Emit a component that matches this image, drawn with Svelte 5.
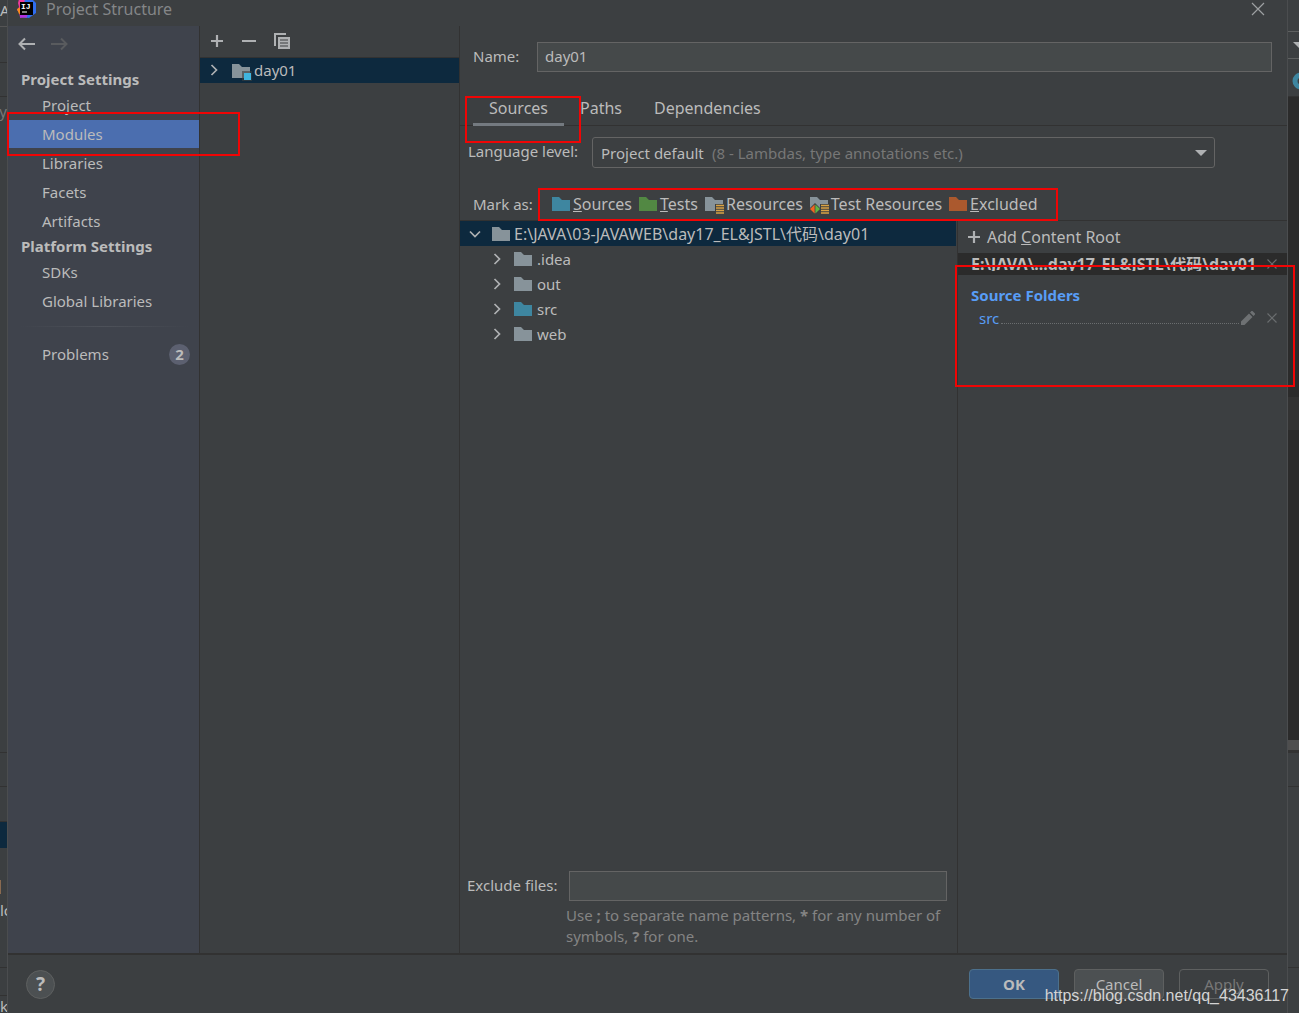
<script>
	let section = $state('Modules');
	let tab = $state('Sources');
	let name = $state('day01');
	let exclude = $state('');

	const projectItems = ['Project', 'Modules', 'Libraries', 'Facets', 'Artifacts'];
	const platformItems = ['SDKs', 'Global Libraries'];
	const tabs = ['Sources', 'Paths', 'Dependencies'];

	const marks = [
		{ key: 'S', rest: 'ources', kind: 'source' },
		{ key: 'T', rest: 'ests', kind: 'test' },
		{ key: '', rest: 'Resources', kind: 'resource' },
		{ key: '', rest: 'Test Resources', kind: 'test-resource' },
		{ key: 'E', rest: 'xcluded', kind: 'excluded' }
	];

	const folders = [
		{ name: '.idea', kind: 'plain' },
		{ name: 'out', kind: 'plain' },
		{ name: 'src', kind: 'source' },
		{ name: 'web', kind: 'plain' }
	];

	const colors = {
		plain: '#87939a',
		source: '#3e86a0',
		test: '#528843',
		resource: '#87939a',
		'test-resource': '#87939a',
		excluded: '#ab592e',
		module: '#87939a'
	};
</script>

{#snippet folder(kind)}
	<svg class="folder" width="20" height="18" viewBox="0 0 20 18" aria-hidden="true">
		<path d="M0 1h7l3 3h8v11H0z" fill={colors[kind]} />
		{#if kind === 'module'}
			<path d="M10 8h10v10H10z" fill="#3c3f41" opacity=".6" />
			<path d="M12 10h7v7h-7z" fill="#40b6e0" />
		{/if}
		{#if kind === 'resource' || kind === 'test-resource'}
			<path d="M10 8h9v10h-9z" fill="#3c3f41" />
			<path d="M11 9.500h8M11 12h8M11 14.500h8M11 17h8" stroke="#d9a343" stroke-width="1.400" />
		{/if}
		{#if kind === 'test-resource'}
			<path d="M0 12l5-5 5 5v6H0z" fill="#3c3f41" />
			<path d="M4.600 8.500v9L0 13z" fill="#f26522" />
			<path d="M5.400 8.500v9L10 13z" fill="#62b543" />
		{/if}
	</svg>
{/snippet}

{#snippet chevron(open)}
	<svg class="chevron" width="12" height="12" viewBox="0 0 12 12" aria-hidden="true">
		<path d={open ? 'M1 3.500l5 5 5-5' : 'M3.500 1l5 5-5 5'} fill="none" stroke="#afb1b3" stroke-width="1.700" />
	</svg>
{/snippet}

{#snippet plus()}
	<svg width="14" height="14" viewBox="0 0 14 14" aria-hidden="true">
		<path d="M7 1v12M1 7h12" stroke="#afb1b3" stroke-width="2.200" />
	</svg>
{/snippet}

{#snippet cross()}
	<svg width="12" height="12" viewBox="0 0 12 12" aria-hidden="true">
		<path d="M1.500 1.500l9 9M10.500 1.500l-9 9" stroke="#6a6d6f" stroke-width="1.200" />
	</svg>
{/snippet}

<div class="screen">
	<div class="behind left">
		<div class="bit l1">A</div>
		<div class="bit l2"></div>
		<div class="bit l3"></div>
		<div class="bit l4">ay</div>
		<div class="bit l5"></div>
		<div class="bit l6"></div>
		<div class="bit selected"></div>
		<div class="bit l7"><i></i>lc</div>
		<div class="bit l8"></div>
		<div class="bit l9">k</div>
	</div>

	<div class="dialog">
		<header>
			<svg class="logo" width="20" height="20" viewBox="0 0 20 20" aria-hidden="true">
				<path d="M2 0h6l3 3-1 16-7-1-1-5-2-2 2-3-1-4z" fill="#f0389a" />
				<path d="M0 10l4-2 1 6-3 1z" fill="#f98b1c" />
				<path d="M8 0h7l4 4v10l-7 5-8-1z" fill="#2f6df0" />
				<path d="M3 15l8-2-1 5-7 1z" fill="#b132e0" />
				<path d="M3 3h13v13H3z" fill="#000" />
				<text x="4" y="10" font-size="8" font-weight="700" fill="#fff">IJ</text>
				<path d="M5 13h5" stroke="#fff" />
			</svg>
			<h1>Project Structure</h1>
			<button class="icon close" aria-label="Close">
				<svg width="14" height="14" viewBox="0 0 14 14"><path d="M1 1l12 12M13 1L1 13" stroke="#9da0a2" stroke-width="1.200" /></svg>
			</button>
		</header>

		<main>
			<nav class="sidebar">
				<div class="history">
					<button class="icon" aria-label="Back">
						<svg width="17" height="14" viewBox="0 0 17 14"><path d="M7 1.500L1.500 7 7 12.500M2 7h15" fill="none" stroke="#afb1b3" stroke-width="2" /></svg>
					</button>
					<button class="icon" aria-label="Forward" disabled>
						<svg width="17" height="14" viewBox="0 0 17 14"><path d="M10 1.500L15.500 7 10 12.500M15 7H0" fill="none" stroke="#595b5e" stroke-width="2" /></svg>
					</button>
				</div>
				<h2>Project Settings</h2>
				{#each projectItems as item}
					<button class="item" class:active={section === item} onclick={() => (section = item)}>
						{item}
						{#if item === 'Modules'}<span class="mark mark-modules"></span>{/if}
					</button>
				{/each}
				<h2>Platform Settings</h2>
				{#each platformItems as item}
					<button class="item" class:active={section === item} onclick={() => (section = item)}>{item}</button>
				{/each}
				<hr />
				<button class="item problems">Problems <span class="badge">2</span></button>
			</nav>

			<section class="modules">
				<div class="tools">
					<button class="icon" aria-label="Add">{@render plus()}</button>
					<button class="icon" aria-label="Remove">
						<svg width="14" height="14" viewBox="0 0 14 14"><path d="M0 7h14" stroke="#afb1b3" stroke-width="2" /></svg>
					</button>
					<button class="icon" aria-label="Copy">
						<svg width="16" height="18" viewBox="0 0 16 18">
							<path d="M1 14V2h11" fill="none" stroke="#afb1b3" stroke-width="2" />
							<path d="M4 5h12v12H4z" fill="#afb1b3" />
							<path d="M6 8h8M6 11h8M6 14h8" stroke="#3c3f41" stroke-width="1.200" />
						</svg>
					</button>
				</div>
				<div class="module">{@render chevron(false)}{@render folder('module')}<span>day01</span></div>
			</section>

			<section class="editor">
				<div class="name">
					<label for="name">Name:</label>
					<input id="name" bind:value={name} />
				</div>

				<div class="tabs" role="tablist">
					{#each tabs as t}
						<button role="tab" aria-selected={tab === t} class:current={tab === t} onclick={() => (tab = t)}>{t}</button>
					{/each}
					<span class="mark mark-tab"></span>
				</div>

				<div class="level">
					<label for="level">Language level:</label>
					<div class="combo">
						<select id="level">
							<option>Project default</option>
						</select>
						<span class="detail">(8 - Lambdas, type annotations etc.)</span>
						<svg class="arrow" width="12" height="6" viewBox="0 0 12 6" aria-hidden="true"><path d="M0 0h12L6 6z" fill="#afb1b3" /></svg>
					</div>
				</div>

				<div class="mark-as">
					<span>Mark as:</span>
					<div class="kinds">
						{#each marks as m}
							<button>{@render folder(m.kind)}<span><u>{m.key}</u>{m.rest}</span></button>
						{/each}
						<span class="mark mark-kinds"></span>
					</div>
				</div>

				<div class="panes">
					<div class="tree-pane">
						<ul class="tree">
							<li class="root">{@render chevron(true)}{@render folder('plain')}<span>E:\JAVA\03-JAVAWEB\day17_EL&amp;JSTL\代码\day01</span></li>
							{#each folders as f}
								<li>{@render chevron(false)}{@render folder(f.kind)}<span>{f.name}</span></li>
							{/each}
						</ul>
						<div class="exclude">
							<label for="exclude">Exclude files:</label>
							<input id="exclude" bind:value={exclude} />
						</div>
						<p>Use <b>;</b> to separate name patterns, <b>*</b> for any number of symbols, <b>?</b> for one.</p>
					</div>

					<aside>
						<button class="add-root">{@render plus()}<span>Add <u>C</u>ontent Root</span></button>
						<div class="content-root">
							<strong>E:\JAVA\...day17_EL&amp;JSTL\代码\day01</strong>
							<button class="icon" aria-label="Remove content root">{@render cross()}</button>
						</div>
						<div class="sources">
							<h3>Source Folders</h3>
							<div class="source">
								<a href="#src">src</a>
								<span class="dots"></span>
								<button class="icon" aria-label="Edit">
									<svg width="14" height="14" viewBox="0 0 14 14"><path d="M0 14v-3.500L8 2.500 11.500 6l-8 8zM9 1.500L10.500 0h1L14 2.500v1L12.500 5z" fill="#6e7173" /></svg>
								</button>
								<button class="icon" aria-label="Remove source folder">{@render cross()}</button>
							</div>
							<span class="mark mark-sources"></span>
						</div>
					</aside>
				</div>
			</section>
		</main>

		<footer>
			<button class="help" aria-label="Help">?</button>
			<button class="push ok">OK</button>
			<button class="push cancel">Cancel</button>
			<button class="push apply" disabled>Apply</button>
		</footer>
	</div>

	<div class="behind right">
		<div class="bit r1"></div>
		<div class="bit r2"><svg width="11" height="7" viewBox="0 0 11 7"><path d="M0 0h11L6 6z" fill="#afb1b3" /></svg></div>
		<div class="bit r3"><svg width="11" height="18" viewBox="0 0 11 18"><circle cx="9" cy="9" r="6" fill="none" stroke="#3e86a0" stroke-width="5" /></svg></div>
		<div class="bit r4"></div>
		<div class="bit r5"></div>
		<div class="bit r6"></div>
		<div class="bit r7"></div>
		<div class="bit r8"></div>
		<div class="bit r9"></div>
		<div class="bit r10"></div>
	</div>

	<div class="watermark">https://blog.csdn.net/qq_43436117</div>
</div>

<style>
	:global(body) {
		background: #3c3f41;
	}

	.screen {
		position: relative;
		display: flex;
		min-height: 100vh;
		overflow: hidden;
		color: #bbbbbb;
		font: 15px/20px "Noto Sans", "Noto Sans CJK SC", sans-serif;
	}

	.screen * {
		box-sizing: border-box;
	}

	button, input, select {
		font: inherit;
		color: inherit;
		margin: 0;
	}

	button {
		background: none;
		border: 0;
		padding: 0;
		white-space: nowrap;
	}

	h1, h2, h3, p, ul {
		margin: 0;
		padding: 0;
		font-size: 15px;
	}

	svg {
		display: block;
		flex: none;
	}

	.icon {
		display: flex;
		flex: none;
	}

	/* red highlight frames */
	.mark {
		position: absolute;
		border: 2px solid #f00505;
		pointer-events: none;
		z-index: 2;
	}

	/* the window behind the dialog */
	.behind {
		display: flex;
		flex-direction: column;
		flex: none;
		overflow: hidden;
	}

	.left {
		width: 7px;
	}

	.right {
		width: 11px;
	}

	.bit {
		flex: none;
		overflow: hidden;
		border-bottom: 1px solid #323232;
	}

	.l1 { height: 27px; border-color: #555; }
	.l2 { height: 36px; }
	.l3 { height: 34px; }
	.l4 { height: 656px; padding-top: 4px; color: #777; direction: rtl; }
	.l5 { height: 34px; }
	.l6 { height: 35px; }
	.selected { height: 26px; background: #0d293e; border: 0; }
	.l7 { height: 120px; padding-top: 32px; }
	.l7 i { display: block; width: 1px; height: 14px; margin-bottom: 6px; background: #8a6a50; }
	.l8 { height: 28px; }
	.l9 { flex: 1; border: 0; }

	.r1 { height: 32px; border-color: #5e6060; }
	.r2 { height: 27px; padding: 10px 0 0 5px; border-color: #5e6060; }
	.r3 { height: 38px; padding: 13px 0 0 4px; }
	.r4 { height: 300px; background: #2b2b2b; border: 0; }
	.r5 { height: 33px; background: #323232; }
	.r6 { height: 310px; background: #2b2b2b; border: 0; }
	.r7 { height: 13px; background: #4e4e4e; border-bottom: 3px solid #333; }
	.r8 { height: 34px; }
	.r9 { height: 181px; }
	.r10 { flex: 1; border: 0; }

	.dialog {
		display: flex;
		flex-direction: column;
		flex: 1;
		min-width: 0;
		border: solid #4b4d4f;
		border-width: 0 1px 1px;
	}

	header {
		display: flex;
		height: 26px;
		padding: 0 22px 0 9px;
	}

	.logo {
		margin-top: -1px;
	}

	.logo text {
		font-family: "Liberation Mono", monospace;
	}

	h1 {
		flex: 1;
		margin-left: 9px;
		color: #848688;
		font-size: 16px;
		font-weight: 400;
		line-height: 18px;
	}

	.close {
		margin-top: 2px;
		align-self: flex-start;
	}

	main {
		display: flex;
		flex: 1;
	}

	.sidebar {
		display: flex;
		flex-direction: column;
		gap: 1px;
		width: 192px;
		flex: none;
		background: #3f434c;
		border-right: 1px solid #323232;
	}

	.history {
		display: flex;
		align-items: center;
		gap: 16px;
		height: 36px;
		margin-bottom: 6px;
		padding-left: 10px;
	}

	h2 {
		height: 21px;
		padding-left: 13px;
		line-height: 20px;
	}

	.item {
		position: relative;
		height: 28px;
		padding-left: 34px;
		text-align: left;
	}

	.active {
		background: #4b6eaf;
	}

	.mark-modules {
		inset: -8px -41px -8px -1px;
	}

	hr {
		width: 168px;
		height: 1px;
		margin: 10px auto 12px;
		border: 0;
		background: linear-gradient(90deg, #3f434c, #4d5159, #3f434c);
	}

	.problems {
		display: flex;
		align-items: center;
		justify-content: space-between;
		padding-right: 9px;
	}

	.badge {
		width: 21px;
		height: 21px;
		border-radius: 50%;
		background: #5c6070;
		font-weight: 700;
		line-height: 21px;
		text-align: center;
	}

	.modules {
		width: 260px;
		flex: none;
		border-right: 1px solid #323232;
	}

	.tools {
		display: flex;
		align-items: center;
		gap: 18px;
		height: 32px;
		padding: 0 0 2px 10px;
		border-bottom: 1px solid #323232;
	}

	.module {
		display: flex;
		align-items: center;
		height: 25px;
		padding: 0 0 2px 8px;
		background: #0d293e;
	}

	.module .folder {
		margin: 3px 2px 0 12px;
	}

	.editor {
		display: flex;
		flex-direction: column;
		flex: 1;
		min-width: 0;
	}

	.name {
		display: flex;
		gap: 16px;
		padding: 16px 15px 0 13px;
	}

	.name label {
		width: 48px;
		line-height: 28px;
	}

	input {
		flex: 1;
		min-width: 0;
		height: 30px;
		padding: 0 7px 2px;
		background: #45494a;
		border: 1px solid #646464;
		outline: 0;
	}

	.tabs {
		position: relative;
		display: flex;
		height: 34px;
		margin-top: 20px;
		padding-left: 13px;
		border-bottom: 1px solid #323232;
		font-size: 16px;
	}

	.tabs button {
		height: 34px;
		padding: 0 16px;
		border-bottom: 3px solid transparent;
	}

	.tabs .current {
		border-color: #747a80;
	}

	.mark-tab {
		left: 5px;
		top: 4px;
		width: 116px;
		height: 47px;
	}

	.level {
		display: flex;
		padding: 11px 72px 0 8px;
	}

	.level label {
		width: 124px;
		line-height: 28px;
	}

	.combo {
		position: relative;
		flex: 1;
	}

	select {
		display: block;
		width: 100%;
		height: 31px;
		padding: 0 8px;
		appearance: none;
		background: #3c3f41;
		border: 1px solid #646464;
		border-radius: 3px;
		outline: 0;
	}

	.detail {
		position: absolute;
		left: 120px;
		top: 6px;
		color: #777777;
		pointer-events: none;
	}

	.arrow {
		position: absolute;
		right: 8px;
		top: 13px;
		pointer-events: none;
	}

	.mark-as {
		display: flex;
		align-items: center;
		height: 33px;
		margin-top: 20px;
		padding-left: 13px;
		border-bottom: 1px solid #323232;
	}

	.mark-as > span {
		width: 65px;
	}

	.kinds {
		position: relative;
		display: flex;
		align-items: center;
		gap: 7px;
		height: 32px;
		padding: 0 20px 0 14px;
		font-size: 16px;
	}

	.kinds button {
		display: flex;
		align-items: center;
		gap: 1px;
	}

	.mark-kinds {
		inset: 0 0 -1px 0;
	}

	.folder {
		position: relative;
		top: 1px;
	}

	.panes {
		display: flex;
		flex: 1;
	}

	.tree-pane {
		display: flex;
		flex-direction: column;
		flex: 3;
		min-width: 0;
		padding-bottom: 6px;
	}

	.tree {
		flex: 1;
		list-style: none;
	}

	li {
		display: flex;
		align-items: center;
		height: 25px;
		padding-left: 31px;
	}

	li .folder {
		margin: 0 3px 0 11px;
	}

	.root {
		margin-right: 1px;
		padding-left: 9px;
		background: #0d293e;
		font-size: 16px;
		white-space: nowrap;
	}

	.root .folder {
		margin-right: 2px;
	}

	.exclude {
		display: flex;
		padding: 0 10px 0 7px;
	}

	.exclude label {
		width: 102px;
		line-height: 28px;
	}

	p {
		padding: 4px 8px 0 106px;
		color: #848484;
		line-height: 21px;
	}

	aside {
		width: 330px;
		flex: none;
		border-left: 1px solid #323232;
	}

	.add-root {
		display: flex;
		align-items: center;
		gap: 6px;
		height: 32px;
		padding-left: 9px;
		font-size: 16px;
	}

	.content-root {
		display: flex;
		align-items: center;
		justify-content: space-between;
		height: 22px;
		padding: 0 9px 0 13px;
		background: #2b2b2b;
		font-size: 16px;
	}

	.content-root strong {
		height: 14px;
		overflow: hidden;
		line-height: 14px;
		white-space: nowrap;
	}

	.sources {
		position: relative;
		height: 110px;
		padding: 10px 9px 0 13px;
		color: #589df6;
	}

	.source {
		display: flex;
		align-items: center;
		height: 25px;
		padding-left: 8px;
	}

	.source a {
		color: inherit;
		text-decoration: none;
	}

	.dots {
		flex: 1;
		height: 12px;
		margin: 0 2px;
		border-bottom: 1px dotted #6a6d6f;
	}

	.source .icon + .icon {
		margin-left: 11px;
	}

	.mark-sources {
		inset: -10px -8px -2px -3px;
	}

	footer {
		display: flex;
		align-items: center;
		gap: 15px;
		height: 60px;
		padding: 0 18px;
		border-top: 2px solid #323232;
		margin-bottom: 2px;
	}

	.help {
		width: 29px;
		height: 29px;
		margin-right: auto;
		border: 1px solid #5e6060;
		border-radius: 50%;
		background: #4c5052;
		font-size: 19px;
		font-weight: 700;
	}

	.push {
		width: 90px;
		height: 30px;
		border: 1px solid #5e6060;
		border-radius: 4px;
	}

	.ok {
		background: #365880;
		border-color: #4c708c;
		font-weight: 700;
	}

	.cancel {
		background: #4c5052;
	}

	.apply {
		color: #777777;
	}

	.watermark {
		position: absolute;
		right: 10px;
		bottom: 10px;
		color: #d4d4d4;
		font: 16px/20px "Liberation Sans", sans-serif;
		z-index: 3;
	}
</style>
